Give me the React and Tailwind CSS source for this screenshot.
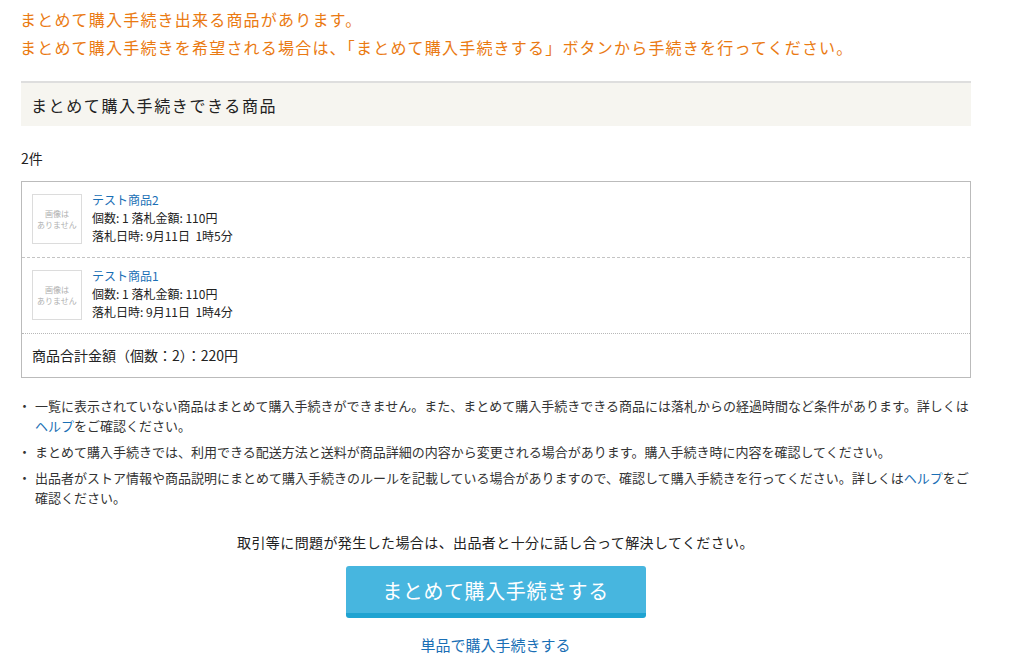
import { Fragment } from "react";

const items = [
  { name: "テスト商品2", qty: 1, price: "110円", date: "9月11日  1時5分" },
  { name: "テスト商品1", qty: 1, price: "110円", date: "9月11日  1時4分" },
];

const notes = [
  [
    "一覧に表示されていない商品はまとめて購入手続きができません。また、まとめて購入手続きできる商品には落札からの経過時間など条件があります。詳しくは",
    <br key="b" />,
    <a key="h" href="#" className="text-[#1a6fb5]">ヘルプ</a>,
    "をご確認ください。",
  ],
  ["まとめて購入手続きでは、利用できる配送方法と送料が商品詳細の内容から変更される場合があります。購入手続き時に内容を確認してください。"],
  [
    "出品者がストア情報や商品説明にまとめて購入手続きのルールを記載している場合がありますので、確認して購入手続きを行ってください。詳しくは",
    <a key="h" href="#" className="text-[#1a6fb5]">ヘルプ</a>,
    "をご",
    <br key="b" />,
    "確認ください。",
  ],
];

function NoImage() {
  return (
    <div className="flex h-[50px] w-[50px] shrink-0 flex-col items-center justify-center border border-[#dcdcdc] bg-white text-[8px] leading-[11px] text-[#b0b0b0]">
      <span>画像は</span>
      <span>ありません</span>
    </div>
  );
}

export default function App() {
  return (
    <div className="min-h-[672px] bg-white pl-[20px] pt-[5px] text-[#333] [font-family:'Noto_Sans_CJK_JP','Noto_Sans',sans-serif]">
      <div className="w-[951px]">
        <p className="text-[16px] leading-[28px] tracking-[1.2px] text-[#ea7a12]">
          まとめて購入手続き出来る商品があります。
          <br />
          まとめて購入手続きを希望される場合は、「まとめて購入手続きする」ボタンから手続きを行ってください。
        </p>

        <div className="ml-[1px] mt-[20px] flex h-[45px] items-center border-t-2 border-[#dedede] bg-[#f6f5f0] px-[10px] text-[16px] tracking-[1.6px] text-[#222]">
          まとめて購入手続きできる商品
        </div>

        <div className="ml-[1px] mt-[22px] text-[14px] leading-[20px] text-[#222]">2件</div>

        <div className="ml-[1px] mt-[13px] border border-[#bbbbbb]">
          {items.map((item, i) => (
            <Fragment key={item.name}>
              <div className="flex gap-[10px] px-[10px] py-[12px]">
                <NoImage />
                <div className="-mt-[3px] text-[12px] leading-[18px] text-[#222]">
                  <a href="#" className="text-[#1a6fb5]">{item.name}</a>
                  <div>個数: {item.qty} 落札金額: {item.price}</div>
                  <div className="whitespace-pre">落札日時: {item.date}</div>
                </div>
              </div>
              {i === 0 ? (
                <div className="border-t border-dashed border-[#c4c4c4]" />
              ) : (
                <div className="border-t border-dotted border-[#b8b8b8]" />
              )}
            </Fragment>
          ))}
          <div className="flex h-[43px] items-center px-[10px] text-[14px] text-[#222]">
            商品合計金額（個数：2）：220円
          </div>
        </div>

        <ul className="mt-[18px] flex flex-col gap-[6px] text-[13px] leading-[20px] text-[#333]">
          {notes.map((parts, i) => (
            <li key={i} className="flex">
              <span className="-ml-[2px] w-[17px] shrink-0">・</span>
              <span>{parts}</span>
            </li>
          ))}
        </ul>

        <p className="mt-[24px] text-center text-[14px] leading-[20px] tracking-[0.4px] text-[#222]">
          取引等に問題が発生した場合は、出品者と十分に話し合って解決してください。
        </p>

        <div className="mt-[14px] flex justify-center">
          <button
            type="button"
            className="flex h-[52px] w-[300px] items-center justify-center rounded-[3px] border-b-[5px] border-[#1fa3d1] bg-[#47b6df] pt-[3px] text-[20px] tracking-[0.6px] text-white"
          >
            まとめて購入手続きする
          </button>
        </div>

        <div className="mt-[17px] text-center text-[15px] leading-[20px]">
          <a href="#" className="text-[#1a6fb5]">単品で購入手続きする</a>
        </div>
      </div>
    </div>
  );
}
